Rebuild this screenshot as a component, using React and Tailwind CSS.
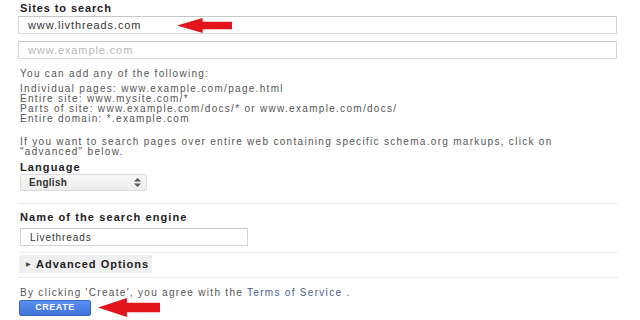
import React from "react";

const RedArrow = ({ className }) => (
  <svg className={className} viewBox="0 0 60 16" preserveAspectRatio="none">
    <polygon points="0,8 28,0 28,4 60,4 60,12 28,12 28,16" fill="#e3141b" />
  </svg>
);

const Input = ({ value, placeholder, className }) => (
  <div
    className={`h-[18px] border border-[#d6d6d6] border-t-[#c8c8c8] bg-white flex items-center px-[9px] ${className}`}
  >
    {value ? (
      <span className="text-[#333]">{value}</span>
    ) : (
      <span className="text-[#b8b8b8]">{placeholder}</span>
    )}
  </div>
);

const Divider = () => <div className="h-px bg-[#ececec] mr-[22px] -ml-[2px]" />;

export default function App() {
  const help = [
    "Individual pages: www.example.com/page.html",
    "Entire site: www.mysite.com/*",
    "Parts of site: www.example.com/docs/* or www.example.com/docs/",
    "Entire domain: *.example.com",
  ];

  return (
    <div className="relative w-[640px] h-[320px] overflow-hidden bg-white font-['Liberation_Sans',Arial,sans-serif] text-[#555] pl-[20px]">
      <div className="pt-[2px] text-[11px] font-bold tracking-[0.9px] text-[#222] leading-[12px]">
        Sites to search
      </div>
      <div className="-ml-[2px] mr-[23px] mt-[2px] flex flex-col gap-[7px] text-[11px] tracking-[0.9px]">
        <Input value="www.livthreads.com" />
        <Input placeholder="www.example.com" />
      </div>

      <div className="mt-[10px] text-[10px] tracking-[1.3px] leading-[10px]">
        <div className="mb-[5px]">You can add any of the following:</div>
        {help.map((line) => (
          <div key={line}>{line}</div>
        ))}
      </div>

      <div className="mt-[13px] text-[10px] tracking-[1.3px] leading-[10px]">
        If you want to search pages over entire web containing specific schema.org markups, click on
        <br />
        "advanced" below.
      </div>

      <div className="mt-[4px] text-[11px] font-bold tracking-[1.1px] text-[#222] leading-[12px]">
        Language
      </div>
      <div className="mt-[1px] w-[127px] h-[17px] border border-[#dcdcdc] bg-gradient-to-b from-[#f8f8f8] to-[#ececec] rounded-[2px] flex items-center justify-between pl-[8px] pr-[5px]">
        <span className="text-[10px] font-bold text-[#333] tracking-[0.3px]">English</span>
        <svg width="7" height="9" viewBox="0 0 7 9">
          <polygon points="3.5,0 7,3.5 0,3.5" fill="#555" />
          <polygon points="0,5.5 7,5.5 3.5,9" fill="#555" />
        </svg>
      </div>

      <div className="mt-[12px]">
        <Divider />
      </div>

      <div className="mt-[7px] text-[11px] font-bold tracking-[1.1px] text-[#222] leading-[12px]">
        Name of the search engine
      </div>
      <Input value="Livethreads" className="mt-[5px] w-[228px] text-[10px] tracking-[0.9px]" />

      <div className="mt-[6px]">
        <Divider />
      </div>
      <div className="mt-[2px] -ml-[1px] w-[133px] h-[18px] bg-[#efefef] flex items-center gap-[5px] pl-[7px]">
        <span className="text-[6px] text-[#444]">▶</span>
        <span className="text-[11px] font-bold text-[#222] tracking-[1px]">Advanced Options</span>
      </div>
      <div className="mt-[4px]">
        <Divider />
      </div>

      <div className="mt-[9px] text-[10px] tracking-[1.3px] leading-[12px]">
        By clicking 'Create', you agree with the <span className="text-[#4b5d8c]">Terms of Service</span> .
      </div>
      <div className="mt-[1px] -ml-[1px] w-[72px] h-[16px] rounded-[2px] border border-[#3a69c4] bg-gradient-to-b from-[#5a8ef0] to-[#3f75da] flex items-center justify-center">
        <span className="text-[9px] font-bold text-white tracking-[0.5px]">CREATE</span>
      </div>

      <RedArrow className="absolute left-[177px] top-[18px] w-[55px] h-[15px]" />
      <RedArrow className="absolute left-[98px] top-[298px] w-[62px] h-[19px]" />
    </div>
  );
}
